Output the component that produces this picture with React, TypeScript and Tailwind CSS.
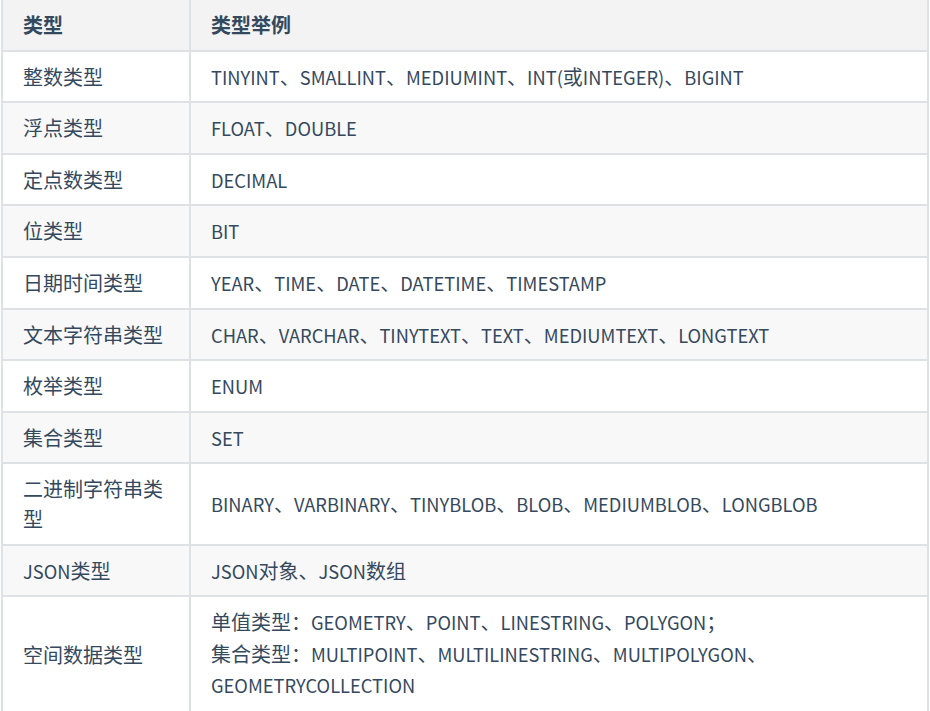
const rows: [string, string[]][] = [
  ['整数类型', ['TINYINT、SMALLINT、MEDIUMINT、INT(或INTEGER)、BIGINT']],
  ['浮点类型', ['FLOAT、DOUBLE']],
  ['定点数类型', ['DECIMAL']],
  ['位类型', ['BIT']],
  ['日期时间类型', ['YEAR、TIME、DATE、DATETIME、TIMESTAMP']],
  ['文本字符串类型', ['CHAR、VARCHAR、TINYTEXT、TEXT、MEDIUMTEXT、LONGTEXT']],
  ['枚举类型', ['ENUM']],
  ['集合类型', ['SET']],
  ['二进制字符串类型', ['BINARY、VARBINARY、TINYBLOB、BLOB、MEDIUMBLOB、LONGBLOB']],
  ['JSON类型', ['JSON对象、JSON数组']],
  [
    '空间数据类型',
    [
      '单值类型：GEOMETRY、POINT、LINESTRING、POLYGON；',
      '集合类型：MULTIPOINT、MULTILINESTRING、MULTIPOLYGON、GEOMETRYCOLLECTION',
    ],
  ],
]

// latin runs render a bit smaller than the CJK ones in the original
function Mixed({ text }: { text: string }) {
  return (
    <>
      {text.split(/([\x20-\x7E]+)/).map((part, i) =>
        /^[\x20-\x7E]+$/.test(part) ? (
          <span key={i} className="text-[18.3px] leading-none">
            {part}
          </span>
        ) : (
          part
        ),
      )}
    </>
  )
}

export default function App() {
  return (
    <div
      className="h-[711px] w-[930px] overflow-hidden bg-white pl-[1px] text-[20px] leading-[29.6px] text-[#34495e]"
      style={{ fontFamily: '"Noto Sans CJK SC", "Noto Sans", sans-serif' }}
    >
      <table className="-mt-[2px] w-[928px] table-fixed border-collapse">
        <colgroup>
          <col className="w-[188px]" />
          <col />
        </colgroup>
        <thead>
          <tr className="bg-[#f3f3f3]">
            <th className="border-2 border-[#dfe2e5] px-5 py-[10px] text-left font-bold">类型</th>
            <th className="border-2 border-[#dfe2e5] px-5 py-[10px] text-left font-bold">类型举例</th>
          </tr>
        </thead>
        <tbody>
          {rows.map(([name, examples], i) => {
            const multi = examples.length > 1
            return (
              <tr key={name} className={i % 2 === 1 ? 'bg-[#f8f8f8]' : 'bg-white'}>
                <td className="border-2 border-[#dfe2e5] px-5 py-[10px] align-middle">
                  <Mixed text={name} />
                </td>
                <td
                  className={
                    multi
                      ? 'border-2 border-[#dfe2e5] px-5 pt-[9px] pb-[12px] align-middle leading-[31.5px]'
                      : 'border-2 border-[#dfe2e5] px-5 py-[10px] align-middle'
                  }
                >
                  {examples.map((e) => (
                    <div key={e}>
                      <Mixed text={e} />
                    </div>
                  ))}
                </td>
              </tr>
            )
          })}
        </tbody>
      </table>
    </div>
  )
}
